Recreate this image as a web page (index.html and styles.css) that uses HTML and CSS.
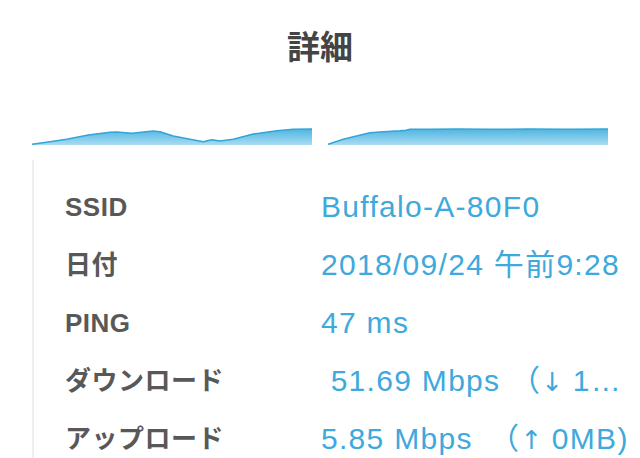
FILE: index.html
```html
<!DOCTYPE html>
<html lang="ja">
<head>
<meta charset="utf-8">
<title>詳細</title>
<link rel="stylesheet" href="styles.css">
</head>
<body>
<div class="page">
  <header class="header">
    <h1 class="title">詳細</h1>
  </header>
  <div class="charts">
    <svg class="chart" width="280" height="17" viewBox="0 0 280 17">
      <defs>
        <linearGradient id="g1" x1="0" y1="0" x2="0" y2="1">
          <stop offset="0" stop-color="#4fb5e2"/>
          <stop offset="1" stop-color="#a8dcf2"/>
        </linearGradient>
      </defs>
      <path d="M0 16.3 L18 13.7 L34.7 11.3 L56.3 7 L78 4.3 L84.7 4 L99.7 5.3 L121.3 3 L128 3.7 L141.3 8 L158 11.3 L171.3 13.7 L179.7 11.7 L188 13 L201.3 11.3 L221.3 6 L244.7 2.7 L261.3 1.3 L280 1 L280 17 L0 17 Z" fill="url(#g1)"/>
      <path d="M0 16.3 L18 13.7 L34.7 11.3 L56.3 7 L78 4.3 L84.7 4 L99.7 5.3 L121.3 3 L128 3.7 L141.3 8 L158 11.3 L171.3 13.7 L179.7 11.7 L188 13 L201.3 11.3 L221.3 6 L244.7 2.7 L261.3 1.3 L280 1" fill="none" stroke="#33a5d6" stroke-width="1.5" stroke-linejoin="round"/>
    </svg>
    <svg class="chart" width="280" height="17" viewBox="0 0 280 17">
      <defs>
        <linearGradient id="g2" x1="0" y1="0" x2="0" y2="1">
          <stop offset="0" stop-color="#4fb5e2"/>
          <stop offset="1" stop-color="#a8dcf2"/>
        </linearGradient>
      </defs>
      <path d="M0 16.3 L15.3 11.3 L25.3 8.7 L42 4.7 L55.3 3.7 L72 2.7 L78 2.2 L82 1.3 L102 1.3 L128.7 1 L160 1.3 L200 1 L240 1.2 L280 1 L280 17 L0 17 Z" fill="url(#g2)"/>
      <path d="M0 16.3 L15.3 11.3 L25.3 8.7 L42 4.7 L55.3 3.7 L72 2.7 L78 2.2 L82 1.3 L102 1.3 L128.7 1 L160 1.3 L200 1 L240 1.2 L280 1" fill="none" stroke="#33a5d6" stroke-width="1.5" stroke-linejoin="round"/>
    </svg>
  </div>
  <div class="table">
    <div class="row"><div class="label">SSID</div><div class="value">Buffalo-A-80F0</div></div>
    <div class="row"><div class="label">日付</div><div class="value">2018/09/24 午前9:28</div></div>
    <div class="row"><div class="label">PING</div><div class="value">47 ms</div></div>
    <div class="row"><div class="label">ダウンロード</div><div class="value"> 51.69 Mbps （<span class="arrow">↓</span> 12.34MB)</div></div>
    <div class="row"><div class="label">アップロード</div><div class="value">5.85 Mbps　（<span class="arrow">↑</span> 0MB)</div></div>
  </div>
</div>
</body>
</html>
```
FILE: styles.css
```css
html, body {
  margin: 0;
  padding: 0;
  background: #ffffff;
  height: 458px;
  overflow: hidden;
}

.page {
  width: 640px;
  font-family: "Liberation Sans", "Noto Sans CJK JP", sans-serif;
}

.header {
  height: 128px;
  box-sizing: border-box;
  padding-top: 25px;
}

.title {
  margin: 0;
  text-align: center;
  font-family: "Noto Sans CJK JP", sans-serif;
  font-weight: 700;
  font-size: 33px;
  line-height: 40px;
  color: #444444;
}

.charts {
  display: flex;
  gap: 16px;
  padding-left: 32px;
  height: 17px;
}

.chart {
  display: block;
}

.table {
  margin-top: 15px;
  margin-left: 32px;
  border-left: 2px solid #efefef;
  padding-top: 18px;
  padding-left: 31px;
}

.row {
  display: grid;
  grid-template-columns: 256px 1fr;
  align-items: center;
  height: 58px;
}

.label {
  font-weight: 700;
  font-size: 26px;
  line-height: 36px;
  letter-spacing: 0.5px;
  color: #585858;
  white-space: nowrap;
}

.value {
  font-size: 30px;
  line-height: 36px;
  letter-spacing: 1.3px;
  color: #3ea9dc;
  white-space: pre;
  overflow: hidden;
  text-overflow: ellipsis;
  padding-right: 10px;
}

.arrow {
  font-family: "DejaVu Sans", sans-serif;
  font-size: 26px;
  letter-spacing: 0;
}
```
